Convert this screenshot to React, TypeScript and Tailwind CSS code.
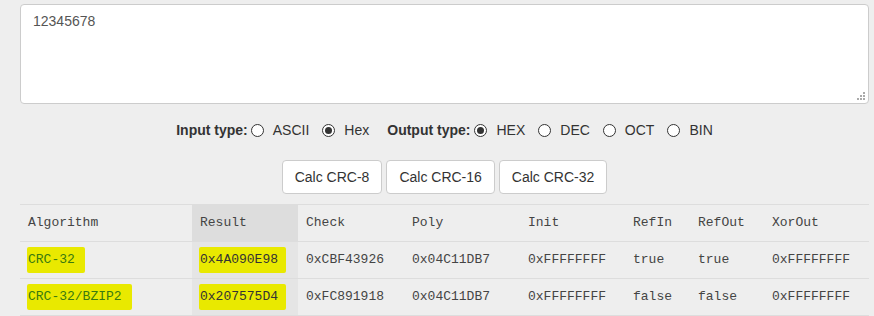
import React from "react";

function Radio({ label, checked, last }: { label: string; checked?: boolean; last?: boolean }) {
  return (
    <label className={`flex items-center gap-[9px] ${last ? "" : "mr-[13px]"}`}>
      <span className="w-[13px] h-[13px] rounded-full border border-[#333] bg-white flex items-center justify-center">
        {checked && <span className="w-[7px] h-[7px] rounded-full bg-[#333]" />}
      </span>
      <span>{label}</span>
    </label>
  );
}

const rows = [
  ["CRC-32", "0x4A090E98", "0xCBF43926", "0x04C11DB7", "0xFFFFFFFF", "true", "true", "0xFFFFFFFF"],
  ["CRC-32/BZIP2", "0x207575D4", "0xFC891918", "0x04C11DB7", "0xFFFFFFFF", "false", "false", "0xFFFFFFFF"],
];

const heads = ["Algorithm", "Result", "Check", "Poly", "Init", "RefIn", "RefOut", "XorOut"];
const widths = ["w-[172px]", "w-[106px]", "w-[106px]", "w-[116px]", "w-[105px]", "w-[65px]", "w-[74px]", ""];

export default function App() {
  return (
    <div className="w-[874px] h-[316px] bg-[#eeeeee] overflow-hidden font-['Liberation_Sans',Arial,sans-serif] text-[14px] text-[#333]">
      <div className="ml-[20px] mr-[5px] pt-[4px]">
        <div className="relative">
          <textarea
            defaultValue="12345678"
            className="block w-full h-[100px] bg-white border border-[#cccccc] rounded-[4px] px-[12px] py-[6px] text-[14px] text-[#555] outline-none resize-none"
          />
          <svg className="absolute right-[3px] bottom-[3px]" width="9" height="9" viewBox="0 0 9 9">
            <g fill="#aaaaaa">
              <rect x="6" y="0" width="2" height="2" />
              <rect x="3" y="3" width="2" height="2" />
              <rect x="6" y="3" width="2" height="2" />
              <rect x="0" y="6" width="2" height="2" />
              <rect x="3" y="6" width="2" height="2" />
              <rect x="6" y="6" width="2" height="2" />
            </g>
          </svg>
        </div>
        <div className="flex justify-center items-center mt-[18px] h-[16px]">
          <b className="mr-[3px]">Input type:</b>
          <Radio label="ASCII" />
          <Radio label="Hex" checked />
          <b className="ml-[5px] mr-[4px]">Output type:</b>
          <Radio label="HEX" checked />
          <Radio label="DEC" />
          <Radio label="OCT" />
          <Radio label="BIN" last />
        </div>
        <div className="flex justify-center gap-[4px] mt-[22px]">
          {["Calc CRC-8", "Calc CRC-16", "Calc CRC-32"].map((t) => (
            <button key={t} className="h-[34px] px-[12px] bg-white border border-[#cccccc] rounded-[4px] text-[14px] text-[#333]">
              {t}
            </button>
          ))}
        </div>
        <table className="w-full mt-[10px] border-collapse font-['Liberation_Mono','Courier_New',monospace] text-[13px] text-[#444]">
          <thead>
            <tr className="h-[37px] border-t border-[#dddddd]">
              {heads.map((h, i) => (
                <th key={h} className={`${widths[i]} text-left font-normal px-[8px] ${i === 1 ? "bg-[#dddddd]" : ""}`}>
                  {h}
                </th>
              ))}
            </tr>
          </thead>
          <tbody>
            {rows.map((r) => (
              <tr key={r[0]} className="h-[37px] border-t border-b border-[#dddddd]">
                {r.map((c, i) => (
                  <td key={i} className={`px-[8px] ${i === 1 ? "bg-[#e5e5e5]" : ""}`}>
                    {i < 2 ? (
                      <span className={`inline-block bg-[#e9e900] py-[3px] px-[1px] -ml-[1px] rounded-[2px] ${i === 0 ? "text-[#3a7a10] pr-[10px]" : "text-[#333] pr-[8px]"}`}>
                        {c}
                      </span>
                    ) : (
                      c
                    )}
                  </td>
                ))}
              </tr>
            ))}
          </tbody>
        </table>
      </div>
    </div>
  );
}
